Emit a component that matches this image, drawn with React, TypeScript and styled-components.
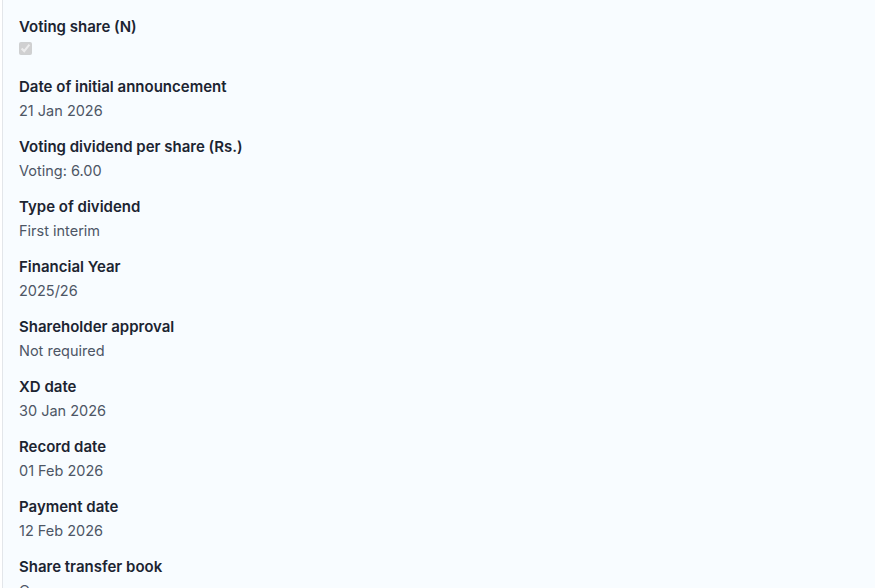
import React from 'react';
import styled, { createGlobalStyle } from 'styled-components';

const GlobalStyle = createGlobalStyle`
  html, body {
    margin: 0;
    padding: 0;
    background: #ffffff;
  }
  body {
    font-family: 'Inter', 'Noto Sans', sans-serif;
  }
`;

const Page = styled.div`
  padding-left: 2px;
  height: 588px;
  overflow: hidden;
`;

const Panel = styled.div`
  border-left: 1px solid #e3e6ea;
  background: #f8fcff;
  height: 100%;
  padding: 16px 16px 0;
  box-sizing: border-box;
`;

const Field = styled.div`
  margin-bottom: 14px;
`;

const Label = styled.div`
  font-size: 15px;
  font-weight: 600;
  line-height: 22px;
  color: #1c2431;
`;

const Value = styled.div`
  margin-top: 2px;
  font-size: 14.5px;
  line-height: 22px;
  color: #4d5665;
`;

const CheckRow = styled.div`
  margin-top: 2px;
  height: 22px;
  padding-top: 2px;
  box-sizing: border-box;
`;

const Check = styled.input`
  display: block;
  margin: 0;
  width: 13px;
  height: 13px;
`;

const fields: { label: string; value: string }[] = [
  { label: 'Date of initial announcement', value: '21 Jan 2026' },
  { label: 'Voting dividend per share (Rs.)', value: 'Voting: 6.00' },
  { label: 'Type of dividend', value: 'First interim' },
  { label: 'Financial Year', value: '2025/26' },
  { label: 'Shareholder approval', value: 'Not required' },
  { label: 'XD date', value: '30 Jan 2026' },
  { label: 'Record date', value: '01 Feb 2026' },
  { label: 'Payment date', value: '12 Feb 2026' },
  { label: 'Share transfer book', value: 'Open' },
];

const App = () => {
  return (
    <Page>
      <GlobalStyle />
      <Panel>
        <Field>
          <Label>Voting share (N)</Label>
          <CheckRow>
            <Check type="checkbox" checked disabled readOnly />
          </CheckRow>
        </Field>
        {fields.map((f) => (
          <Field key={f.label}>
            <Label>{f.label}</Label>
            <Value>{f.value}</Value>
          </Field>
        ))}
      </Panel>
    </Page>
  );
};

export default App;
